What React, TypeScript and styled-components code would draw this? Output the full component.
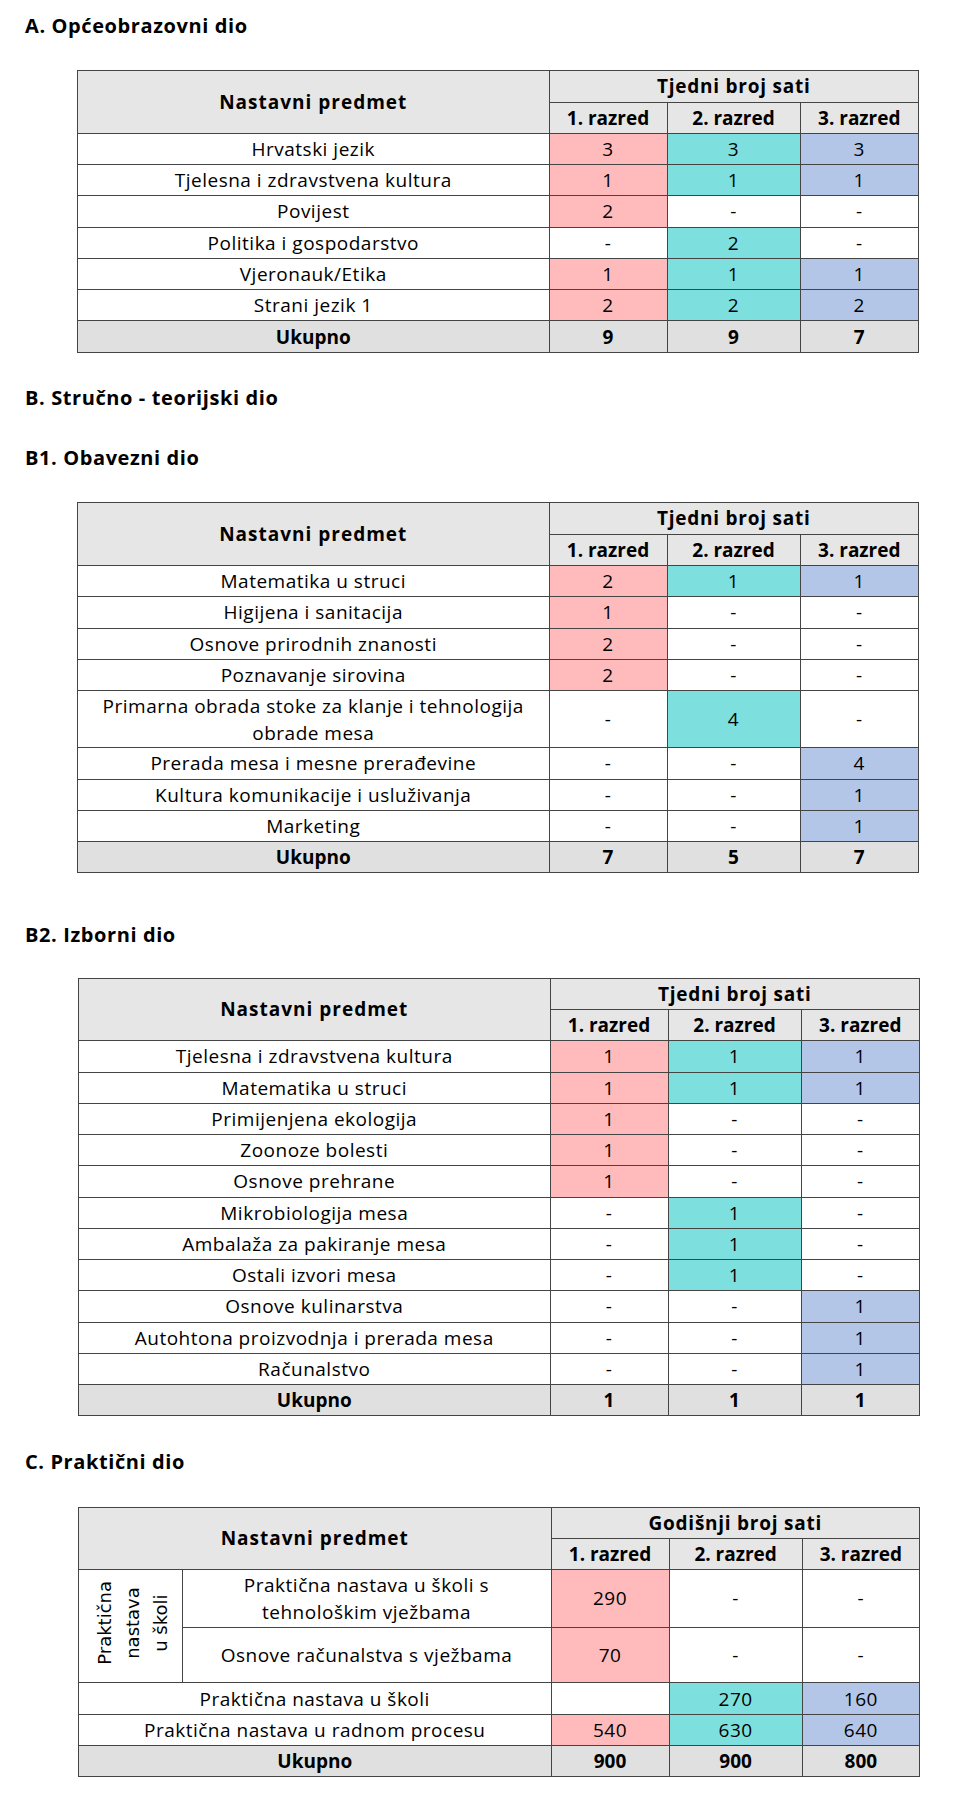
import React from "react";
import styled, { createGlobalStyle, css } from "styled-components";

const GlobalStyle = createGlobalStyle`
  html, body { margin: 0; padding: 0; background: #ffffff; }
  body { font-family: "Open Sans", "Liberation Sans", sans-serif; color: #000; }
`;

type Tone = "pink" | "teal" | "blue";
const toneColor: Record<Tone, string> = {
  pink: "#ffbbbb",
  teal: "#7ee0de",
  blue: "#b4c6e7",
};
const tones: Tone[] = ["pink", "teal", "blue"];

const Page = styled.div`
  width: 978px;
  min-height: 1817px;
  padding: 13.5px 0 0 0;
  box-sizing: border-box;
`;

const SectionTitle = styled.h2<{ $mt: number; $mb: number }>`
  margin: ${(p) => p.$mt}px 0 ${(p) => p.$mb}px 25px;
  font-size: 20px;
  line-height: 24px;
  height: 24px;
  font-weight: 700;
  letter-spacing: 0.6px;
`;

const Table = styled.table<{ $left: number }>`
  margin-left: ${(p) => p.$left}px;
  width: 841px;
  border-collapse: collapse;
  table-layout: fixed;
  font-size: 19px;
  letter-spacing: 0.5px;
  border: 1px solid #2e2e2e;
`;

const Row = styled.tr<{ $h: number }>`
  height: ${(p) => p.$h}px;
`;

const cellBase = css`
  border: 1px solid #444;
  padding: 1px 0 0 0;
  text-align: center;
  vertical-align: middle;
  line-height: 27px;
  white-space: nowrap;
`;

const HeadCell = styled.th<{ $spread?: number }>`
  ${cellBase};
  background: #e7e6e6;
  font-weight: 700;
  letter-spacing: ${(p) => p.$spread ?? 0}px;
`;

const Cell = styled.td<{ $tone?: Tone }>`
  ${cellBase};
  background: ${(p) => (p.$tone ? toneColor[p.$tone] : "#ffffff")};
`;

const TotalCell = styled.td`
  ${cellBase};
  background: #e0e0e0;
  font-weight: 700;
  letter-spacing: 0;
`;

const VerticalCell = styled.td`
  border: 1px solid #444;
  padding: 0;
  text-align: center;
  vertical-align: middle;
  background: #fff;
`;

const VerticalLabel = styled.div`
  display: inline-block;
  writing-mode: vertical-rl;
  transform: rotate(180deg);
  font-family: "DejaVu Sans", sans-serif;
  font-size: 18px;
  line-height: 28px;
  letter-spacing: 0;
  text-align: center;
  margin-left: 6px;
`;

type DataRow = { name: React.ReactNode; vals: string[]; h?: number };

const ValueCells = ({ vals }: { vals: string[] }) => (
  <>
    {vals.map((v, i) => (
      <Cell key={i} $tone={v !== "-" && v !== "" ? tones[i] : undefined}>
        {v}
      </Cell>
    ))}
  </>
);

const WeeklyTable = ({
  rows,
  total,
  headH,
  rowH,
  left,
}: {
  rows: DataRow[];
  total: string[];
  headH: [number, number];
  rowH: number;
  left: number;
}) => (
  <Table $left={left}>
    <colgroup>
      <col style={{ width: 471.5 }} />
      <col style={{ width: 118 }} />
      <col style={{ width: 133 }} />
      <col style={{ width: 118.5 }} />
    </colgroup>
    <thead>
      <Row $h={headH[0]}>
        <HeadCell rowSpan={2} $spread={1}>
          Nastavni predmet
        </HeadCell>
        <HeadCell colSpan={3} $spread={0.75}>
          Tjedni broj sati
        </HeadCell>
      </Row>
      <Row $h={headH[1]}>
        <HeadCell>1. razred</HeadCell>
        <HeadCell>2. razred</HeadCell>
        <HeadCell>3. razred</HeadCell>
      </Row>
    </thead>
    <tbody>
      {rows.map((r, i) => (
        <Row key={i} $h={r.h ?? rowH}>
          <Cell>{r.name}</Cell>
          <ValueCells vals={r.vals} />
        </Row>
      ))}
      <Row $h={rowH}>
        <TotalCell>Ukupno</TotalCell>
        {total.map((t, i) => (
          <TotalCell key={i}>{t}</TotalCell>
        ))}
      </Row>
    </tbody>
  </Table>
);

const tableA: DataRow[] = [
  { name: "Hrvatski jezik", vals: ["3", "3", "3"] },
  { name: "Tjelesna i zdravstvena kultura", vals: ["1", "1", "1"] },
  { name: "Povijest", vals: ["2", "-", "-"] },
  { name: "Politika i gospodarstvo", vals: ["-", "2", "-"] },
  { name: "Vjeronauk/Etika", vals: ["1", "1", "1"] },
  { name: "Strani jezik 1", vals: ["2", "2", "2"] },
];

const tableB1: DataRow[] = [
  { name: "Matematika u struci", vals: ["2", "1", "1"] },
  { name: "Higijena i sanitacija", vals: ["1", "-", "-"] },
  { name: "Osnove prirodnih znanosti", vals: ["2", "-", "-"] },
  { name: "Poznavanje sirovina", vals: ["2", "-", "-"] },
  {
    name: (
      <>
        Primarna obrada stoke za klanje i tehnologija
        <br />
        obrade mesa
      </>
    ),
    vals: ["-", "4", "-"],
    h: 57,
  },
  { name: "Prerada mesa i mesne prerađevine", vals: ["-", "-", "4"] },
  { name: "Kultura komunikacije i usluživanja", vals: ["-", "-", "1"] },
  { name: "Marketing", vals: ["-", "-", "1"] },
];

const tableB2: DataRow[] = [
  { name: "Tjelesna i zdravstvena kultura", vals: ["1", "1", "1"] },
  { name: "Matematika u struci", vals: ["1", "1", "1"] },
  { name: "Primijenjena ekologija", vals: ["1", "-", "-"] },
  { name: "Zoonoze bolesti", vals: ["1", "-", "-"] },
  { name: "Osnove prehrane", vals: ["1", "-", "-"] },
  { name: "Mikrobiologija mesa", vals: ["-", "1", "-"] },
  { name: "Ambalaža za pakiranje mesa", vals: ["-", "1", "-"] },
  { name: "Ostali izvori mesa", vals: ["-", "1", "-"] },
  { name: "Osnove kulinarstva", vals: ["-", "-", "1"] },
  { name: "Autohtona proizvodnja i prerada mesa", vals: ["-", "-", "1"] },
  { name: "Računalstvo", vals: ["-", "-", "1"] },
];

const PracticalTable = () => (
  <Table $left={78}>
    <colgroup>
      <col style={{ width: 103.5 }} />
      <col style={{ width: 369 }} />
      <col style={{ width: 118 }} />
      <col style={{ width: 133.3 }} />
      <col style={{ width: 117.2 }} />
    </colgroup>
    <thead>
      <Row $h={31.6}>
        <HeadCell rowSpan={2} colSpan={2} $spread={1}>
          Nastavni predmet
        </HeadCell>
        <HeadCell colSpan={3} $spread={0.75}>
          Godišnji broj sati
        </HeadCell>
      </Row>
      <Row $h={31}>
        <HeadCell>1. razred</HeadCell>
        <HeadCell>2. razred</HeadCell>
        <HeadCell>3. razred</HeadCell>
      </Row>
    </thead>
    <tbody>
      <Row $h={57.4}>
        <VerticalCell rowSpan={2}>
          <VerticalLabel>
            Praktična
            <br />
            nastava
            <br />u školi
          </VerticalLabel>
        </VerticalCell>
        <Cell>
          Praktična nastava u školi s
          <br />
          tehnološkim vježbama
        </Cell>
        <ValueCells vals={["290", "-", "-"]} />
      </Row>
      <Row $h={55.6}>
        <Cell>Osnove računalstva s vježbama</Cell>
        <ValueCells vals={["70", "-", "-"]} />
      </Row>
      <Row $h={31.7}>
        <Cell colSpan={2}>Praktična nastava u školi</Cell>
        <ValueCells vals={["", "270", "160"]} />
      </Row>
      <Row $h={31}>
        <Cell colSpan={2}>Praktična nastava u radnom procesu</Cell>
        <ValueCells vals={["540", "630", "640"]} />
      </Row>
      <Row $h={31}>
        <TotalCell colSpan={2}>Ukupno</TotalCell>
        <TotalCell>900</TotalCell>
        <TotalCell>900</TotalCell>
        <TotalCell>800</TotalCell>
      </Row>
    </tbody>
  </Table>
);

export default function App() {
  return (
    <Page>
      <GlobalStyle />
      <SectionTitle $mt={0} $mb={32.5}>A. Općeobrazovni dio</SectionTitle>
      <WeeklyTable rows={tableA} total={["9", "9", "7"]} headH={[31.7, 31]} rowH={31.3} left={77} />
      <SectionTitle $mt={33.5} $mb={0}>B. Stručno - teorijski dio</SectionTitle>
      <SectionTitle $mt={36} $mb={31.8}>B1. Obavezni dio</SectionTitle>
      <WeeklyTable rows={tableB1} total={["7", "5", "7"]} headH={[31.7, 31.3]} rowH={31.3} left={77} />
      <SectionTitle $mt={49.6} $mb={30.5}>B2. Izborni dio</SectionTitle>
      <WeeklyTable rows={tableB2} total={["1", "1", "1"]} headH={[31.4, 31.4]} rowH={31.25} left={78} />
      <SectionTitle $mt={33.8} $mb={32.5}>C. Praktični dio</SectionTitle>
      <PracticalTable />
    </Page>
  );
}
